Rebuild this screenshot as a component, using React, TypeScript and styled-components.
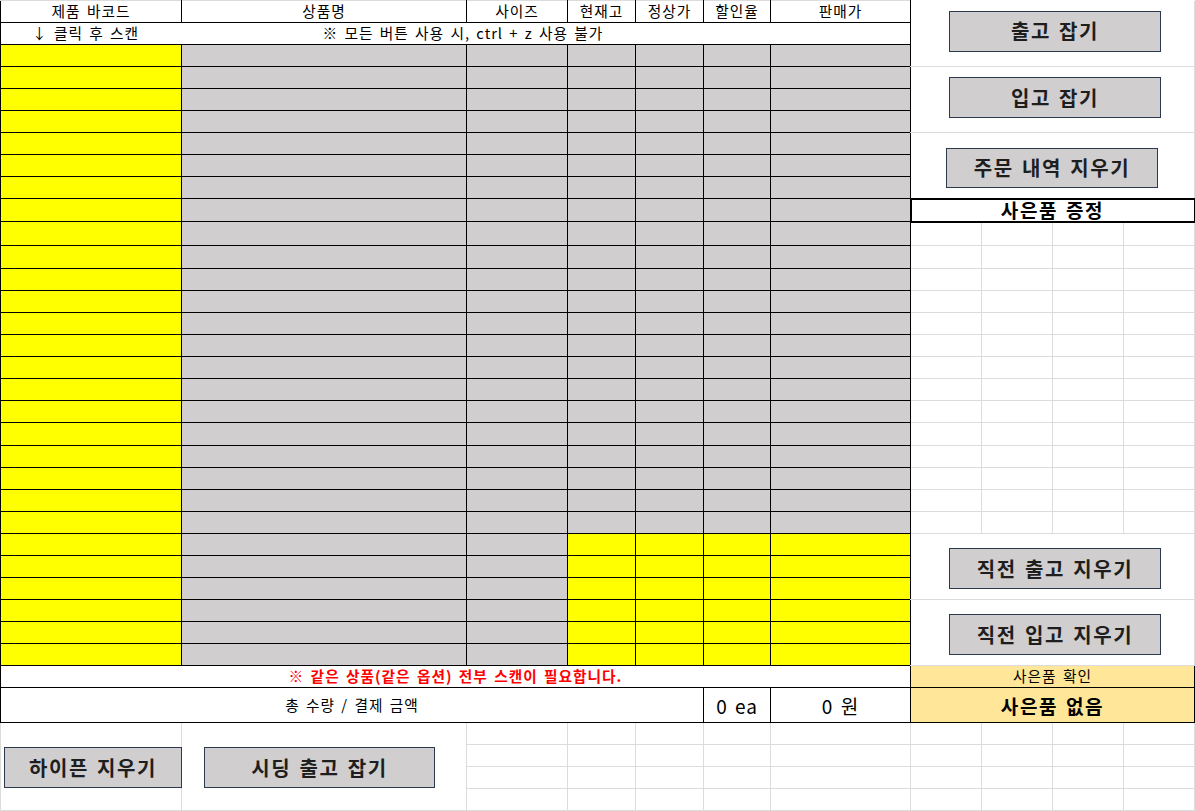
import React from "react";
import styled, { createGlobalStyle } from "styled-components";

const GlobalStyle = createGlobalStyle`
  html, body {
    margin: 0;
    padding: 0;
    background: #fff;
  }
  body {
    font-family: "Noto Sans CJK KR", "Noto Sans", sans-serif;
    overflow: hidden;
  }
`;

// column widths of the sheet, A..K
const COLS = [181, 285, 101, 68, 68, 67, 140, 71, 71, 71, 71];

// heights of the 28 entry rows (row 3 .. row 30 of the sheet)
const DATA_HEIGHTS = [
  22, 22, 22, 22, 22, 22, 22, 22, 24, 23, 22, 22, 22, 22, 22, 22, 22, 23, 22, 22,
  22, 22, 22, 22, 22, 22, 22, 22,
];

const GRID = "#dcdcdc";

const fills = {
  white: "#ffffff",
  yellow: "#ffff00",
  grey: "#d0cece",
  peach: "#ffe699",
};
type Fill = keyof typeof fills;

const Sheet = styled.table`
  border-collapse: collapse;
  table-layout: fixed;
  width: 1195px;
  font-family: "Noto Sans CJK KR", "Noto Sans", sans-serif;
  letter-spacing: 1px;
  word-spacing: 2px;
  color: #000;
`;

const Row = styled.tr<{ $h: number }>`
  height: ${(p) => p.$h}px;
`;

const Cell = styled.td<{
  $fill?: Fill;
  $size?: number;
  $bold?: boolean;
  $color?: string;
  $pad?: number;
  $noLeft?: boolean;
  $noRight?: boolean;
}>`
  padding: 0 0 0 ${(p) => p.$pad ?? 0}px;
  background: ${(p) => fills[p.$fill ?? "white"]};
  border: 1px solid #000;
  ${(p) => (p.$noLeft ? "border-left: none;" : "")}
  ${(p) => (p.$noRight ? "border-right: none;" : "")}
  font-size: ${(p) => p.$size ?? 14.7}px;
  font-weight: ${(p) => (p.$bold ? 700 : 400)};
  color: ${(p) => p.$color ?? "#000"};
  text-align: ${(p) => (p.$pad ? "left" : "center")};
  vertical-align: middle;
  line-height: 1;
  white-space: nowrap;
  overflow: hidden;
`;

const HeadCell = styled(Cell)`
  border-top: 1px solid ${GRID};
`;

const GiftBox = styled.td<{ $weight: number }>`
  padding: 0 0 2px;
  border: ${(p) => p.$weight}px solid #000;
  background: #fff;
  text-align: center;
  vertical-align: middle;
  font-size: 19px;
  font-weight: 700;
  letter-spacing: 1.6px;
  line-height: 1;
  white-space: nowrap;
`;

const GiftState = styled.td<{ $size: number; $bold?: boolean }>`
  padding: 0;
  border: 1px solid #000;
  background: ${fills.peach};
  text-align: center;
  vertical-align: middle;
  font-size: ${(p) => p.$size}px;
  font-weight: ${(p) => (p.$bold ? 700 : 400)};
  letter-spacing: ${(p) => (p.$bold ? 1.6 : 1)}px;
  line-height: 1;
  white-space: nowrap;
`;

const GridCell = styled.td<{ $left?: boolean }>`
  padding: 0;
  border-style: none solid solid ${(p) => (p.$left ? "solid" : "none")};
  border-width: 1px;
  border-color: ${GRID};
`;

// an area of merged cells that holds one floating sheet button
const Slot = styled(GridCell)<{ $top: number; $inset: number }>`
  padding: ${(p) => p.$top}px 0 0 ${(p) => p.$inset}px;
  vertical-align: top;
  line-height: 0;
  white-space: nowrap;
`;

const SheetButton = styled.button<{ $w: number; $h?: number }>`
  box-sizing: border-box;
  width: ${(p) => p.$w}px;
  height: ${(p) => p.$h ?? 41}px;
  margin: 0;
  padding: 0;
  background: #d0cece;
  border: 1px solid #2c3a50;
  border-radius: 0;
  color: #1e1e1e;
  font-family: "Noto Sans CJK KR", "Noto Sans", sans-serif;
  font-size: 20px;
  font-weight: 700;
  line-height: 1;
  letter-spacing: 1.6px;
  word-spacing: 2px;
  cursor: pointer;
`;

const HEADERS = ["제품 바코드", "상품명", "사이즈", "현재고", "정상가", "할인율", "판매가"];

function RightSide({ d }: { d: number }) {
  if (d === 1)
    return (
      <Slot colSpan={4} rowSpan={3} $top={10} $inset={38}>
        <SheetButton $w={212}>입고 잡기</SheetButton>
      </Slot>
    );
  if (d === 4)
    return (
      <Slot colSpan={4} rowSpan={3} $top={15} $inset={35}>
        <SheetButton $w={212} $h={40}>
          주문 내역 지우기
        </SheetButton>
      </Slot>
    );
  if (d === 7)
    return (
      <GiftBox colSpan={4} $weight={2}>
        사은품 증정
      </GiftBox>
    );
  if (d >= 8 && d <= 21)
    return (
      <>
        <GridCell />
        <GridCell />
        <GridCell />
        <GridCell />
      </>
    );
  if (d === 22)
    return (
      <Slot colSpan={4} rowSpan={3} $top={14} $inset={38}>
        <SheetButton $w={212}>직전 출고 지우기</SheetButton>
      </Slot>
    );
  if (d === 25)
    return (
      <Slot colSpan={4} rowSpan={3} $top={14} $inset={38}>
        <SheetButton $w={212}>직전 입고 지우기</SheetButton>
      </Slot>
    );
  return null;
}

function EntryRow({ d, h }: { d: number; h: number }) {
  const lower: Fill = d >= 22 ? "yellow" : "grey";
  return (
    <Row $h={h}>
      <Cell $fill="yellow" />
      <Cell $fill="grey" />
      <Cell $fill="grey" />
      <Cell $fill={lower} />
      <Cell $fill={lower} />
      <Cell $fill={lower} />
      <Cell $fill={lower} />
      <RightSide d={d} />
    </Row>
  );
}

export default function App() {
  return (
    <>
      <GlobalStyle />
      <Sheet>
        <colgroup>
          {COLS.map((w, i) => (
            <col key={i} style={{ width: w }} />
          ))}
        </colgroup>
        <tbody>
          <Row $h={22}>
            {HEADERS.map((t) => (
              <HeadCell key={t}>{t}</HeadCell>
            ))}
            <Slot colSpan={4} rowSpan={3} $top={10} $inset={38}>
              <SheetButton $w={212}>출고 잡기</SheetButton>
            </Slot>
          </Row>
          <Row $h={22}>
            <Cell $noRight $pad={31}>
              ↓ 클릭 후 스캔
            </Cell>
            <Cell colSpan={6} $noLeft $pad={141}>
              ※ 모든 버튼 사용 시, ctrl + z 사용 불가
            </Cell>
          </Row>

          {DATA_HEIGHTS.map((h, d) => (
            <EntryRow key={d} d={d} h={h} />
          ))}

          <Row $h={22}>
            <Cell colSpan={7} $bold $color="#ff0000">
              ※ 같은 상품(같은 옵션) 전부 스캔이 필요합니다.
            </Cell>
            <GiftState colSpan={4} $size={14.7}>
              사은품 확인
            </GiftState>
          </Row>
          <Row $h={35}>
            <Cell colSpan={5}>총 수량 / 결제 금액</Cell>
            <Cell $size={19}>0 ea</Cell>
            <Cell $size={19}>0 원</Cell>
            <GiftState colSpan={4} $size={19} $bold>
              사은품 없음
            </GiftState>
          </Row>

          <Row $h={22}>
            <Slot rowSpan={4} $top={24} $inset={3} $left>
              <SheetButton $w={178}>하이픈 지우기</SheetButton>
            </Slot>
            <Slot rowSpan={4} $top={24} $inset={22}>
              <SheetButton $w={231}>시딩 출고 잡기</SheetButton>
            </Slot>
            {Array.from({ length: 9 }, (_, i) => (
              <GridCell key={i} />
            ))}
          </Row>
          {[0, 1, 2].map((r) => (
            <Row key={r} $h={22}>
              {Array.from({ length: 9 }, (_, i) => (
                <GridCell key={i} />
              ))}
            </Row>
          ))}
        </tbody>
      </Sheet>
    </>
  );
}
